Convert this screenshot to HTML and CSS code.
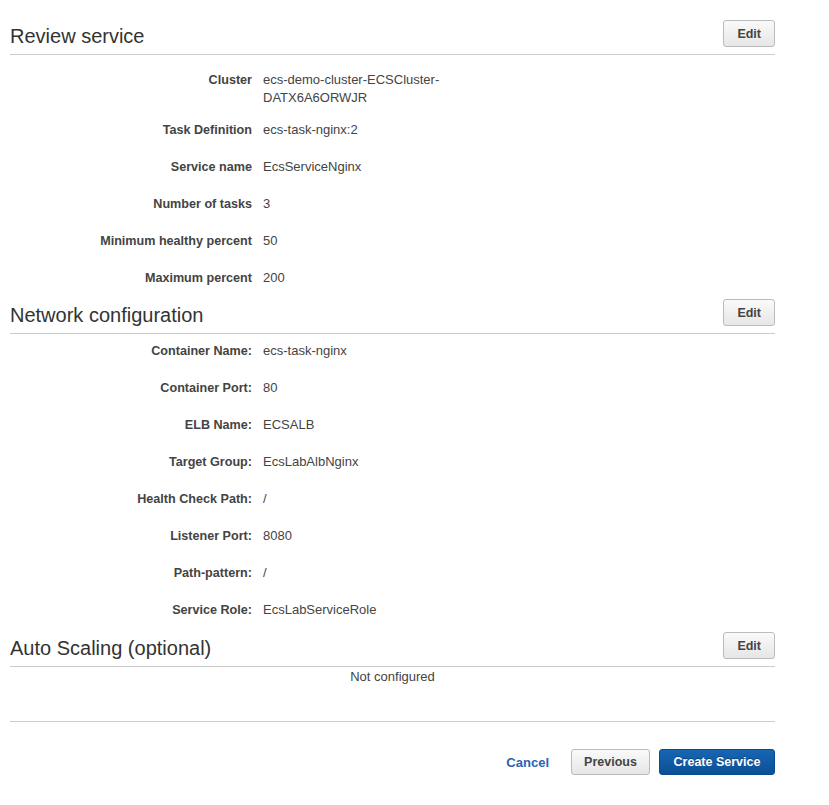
FILE: index.html
```html
<!DOCTYPE html>
<html lang="en">
<head>
    <meta charset="UTF-8">
    <title>Review service</title>
    <link rel="stylesheet" href="styles.css">
</head>
<body>
    <div class="page">
        <div class="section">
            <div class="section-head">
                <h2>Review service</h2>
                <a href="javascript:;" class="btn">Edit</a>
            </div>
            <div class="details first">
                <div class="row row-wrap">
                    <span class="label">Cluster</span>
                    <span class="value">ecs-demo-cluster-ECSCluster-DATX6A6ORWJR</span>
                </div>
                <div class="row">
                    <span class="label">Task Definition</span>
                    <span class="value">ecs-task-nginx:2</span>
                </div>
                <div class="row">
                    <span class="label">Service name</span>
                    <span class="value">EcsServiceNginx</span>
                </div>
                <div class="row">
                    <span class="label">Number of tasks</span>
                    <span class="value">3</span>
                </div>
                <div class="row">
                    <span class="label">Minimum healthy percent</span>
                    <span class="value">50</span>
                </div>
                <div class="row">
                    <span class="label">Maximum percent</span>
                    <span class="value">200</span>
                </div>
            </div>
        </div>

        <div class="section">
            <div class="section-head">
                <h2>Network configuration</h2>
                <a href="javascript:;" class="btn">Edit</a>
            </div>
            <div class="details network">
                <div class="row">
                    <span class="label">Container Name:</span>
                    <span class="value">ecs-task-nginx</span>
                </div>
                <div class="row">
                    <span class="label">Container Port:</span>
                    <span class="value">80</span>
                </div>
                <div class="row">
                    <span class="label">ELB Name:</span>
                    <span class="value">ECSALB</span>
                </div>
                <div class="row">
                    <span class="label">Target Group:</span>
                    <span class="value">EcsLabAlbNginx</span>
                </div>
                <div class="row">
                    <span class="label">Health Check Path:</span>
                    <span class="value">/</span>
                </div>
                <div class="row">
                    <span class="label">Listener Port:</span>
                    <span class="value">8080</span>
                </div>
                <div class="row">
                    <span class="label">Path-pattern:</span>
                    <span class="value">/</span>
                </div>
                <div class="row">
                    <span class="label">Service Role:</span>
                    <span class="value">EcsLabServiceRole</span>
                </div>
            </div>
        </div>

        <div class="section">
            <div class="section-head">
                <h2>Auto Scaling (optional)</h2>
                <a href="javascript:;" class="btn">Edit</a>
            </div>
            <p class="empty">Not configured</p>
        </div>

        <div class="footer">
            <a href="javascript:;" class="link">Cancel</a>
            <a href="javascript:;" class="btn btn-wide">Previous</a>
            <a href="javascript:;" class="btn btn-primary">Create Service</a>
        </div>
    </div>
</body>
</html>
```

FILE: styles.css
```css
* {
    margin: 0;
    padding: 0;
    box-sizing: border-box;
}
body {
    font-family: "Liberation Sans", Arial, sans-serif;
    font-size: 13px;
    color: #444;
    background: #fff;
}
.page {
    width: 765px;
    margin: 0 0 0 10px;
    padding-top: 20px;
}
.section {
    margin-bottom: 1px;
}
.section-head {
    display: flex;
    justify-content: space-between;
    align-items: flex-end;
    padding-bottom: 7px;
    border-bottom: 1px solid #ccc;
}
.section-head h2 {
    font-size: 20px;
    font-weight: normal;
    line-height: 22px;
    color: #333;
}
.btn {
    display: inline-flex;
    align-items: center;
    justify-content: center;
    height: 27px;
    padding: 0 13px;
    border: 1px solid #bbb;
    border-radius: 3px;
    background: linear-gradient(#fafafa, #e6e6e6);
    color: #444;
    font-weight: bold;
    font-size: 12.5px;
    text-decoration: none;
}
.details.first {
    padding-top: 8px;
}
.details.network {
    padding-bottom: 1px;
}
.row {
    display: grid;
    grid-template-columns: 242px 185px;
    column-gap: 11px;
    line-height: 18px;
    padding: 8px 0 11px;
}
.row-wrap {
    padding-bottom: 6px;
}
.label {
    text-align: right;
    font-weight: bold;
    font-size: 12.6px;
}
.empty {
    text-align: center;
    line-height: 16px;
    padding: 2px 0 36px;
    border-bottom: 1px solid #ccc;
}
.footer {
    display: flex;
    justify-content: flex-end;
    align-items: center;
    padding-top: 26px;
}
.link {
    color: #2a63b8;
    font-weight: bold;
    text-decoration: none;
    margin-right: 22px;
}
.btn-wide {
    height: 26px;
    width: 79px;
    margin-right: 9px;
}
.btn-primary {
    height: 26px;
    width: 116px;
    border-color: #0b4a92;
    background: linear-gradient(#1766b4, #0c4f97);
    color: #fff;
    text-shadow: 0 -1px 0 rgba(0, 0, 0, 0.3);
}
```
